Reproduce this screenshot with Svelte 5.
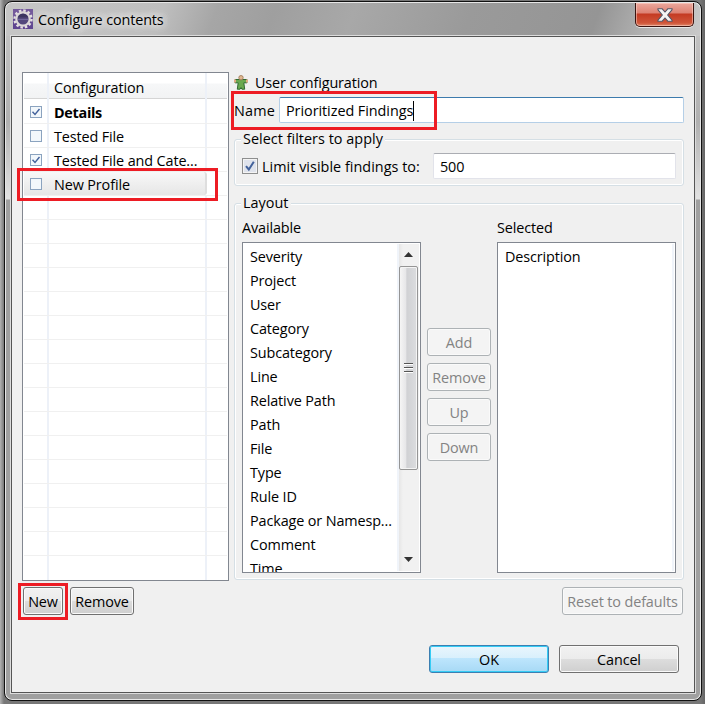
<script lang="ts">
    let name = 'Prioritized Findings';
    let limit = '500';

    const profiles = [
        { label: 'Details', checked: true, bold: true },
        { label: 'Tested File', checked: false },
        { label: 'Tested File and Cate...', checked: true },
        { label: 'New Profile', checked: false, selected: true }
    ];
    const emptyRows = Array(16);

    const available = [
        'Severity', 'Project', 'User', 'Category', 'Subcategory', 'Line', 'Relative Path',
        'Path', 'File', 'Type', 'Rule ID', 'Package or Namesp...', 'Comment', 'Time'
    ];
    const selected = ['Description'];
    const actions = ['Add', 'Remove', 'Up', 'Down'];
</script>

<div class="desktop">
    <div class="window">
        <header class="titlebar">
            <svg class="app-icon" width="20" height="20" viewBox="0 0 20 20">
                <rect width="20" height="20" fill="#5f4590" />
                <rect width="20" height="7" fill="#8068a4" opacity=".6" />
                <circle cx="10" cy="10" r="8.500" fill="none" stroke="#e4e0e2" stroke-width="2.400" stroke-dasharray="2.500 1.950" />
                <circle cx="10" cy="10" r="6.700" fill="#53487c" stroke="#dcd8d8" stroke-width="2.200" />
                <path d="M5 8.500a5.200 5.200 0 0 1 10 0z" fill="#3c3560" />
                <path d="M5 10.500h10" stroke="#6f669b" stroke-width="1" />
            </svg>
            <span class="title">Configure contents</span>
            <button class="close" aria-label="Close">
                <svg width="16" height="14" viewBox="0 0 16 14">
                    <path d="M1 .8h4.200L8 4 10.800.8H15v1L10.700 7 15 12.200v1h-4.200L8 10l-2.800 3.200H1v-1L5.300 7 1 1.800z" fill="#f4f4f4" stroke="#535666" stroke-width="1.100" />
                </svg>
            </button>
        </header>

        <main class="client">
            <div class="columns">
                <section class="left">
                    <div class="table">
                        <div class="table-row head">
                            <span class="cell check-cell"></span>
                            <span class="cell name-cell">Configuration</span>
                        </div>
                        {#each profiles as profile}
                            <div class="table-row" class:selected={profile.selected}>
                                <span class="cell check-cell">
                                    <span class="tick">
                                        {#if profile.checked}
                                            <svg width="10" height="10" viewBox="0 0 10 10"><path d="M1.500 4.800 4 7.500 8.500 2" /></svg>
                                        {/if}
                                    </span>
                                </span>
                                <span class="cell name-cell" class:bold={profile.bold}>{profile.label}</span>
                                {#if profile.selected}
                                    <span class="mark mark-row"></span>
                                {/if}
                            </div>
                        {/each}
                        {#each emptyRows as _}
                            <div class="table-row">
                                <span class="cell check-cell"></span>
                                <span class="cell name-cell"></span>
                            </div>
                        {/each}
                    </div>
                    <div class="table-buttons">
                        <button class="btn new">New<span class="mark mark-new"></span></button>
                        <button class="btn">Remove</button>
                    </div>
                </section>

                <section class="right">
                    <div class="owner">
                        <svg width="14" height="15" viewBox="0 0 14 15">
                            <path d="M1 4.500h12v3.300H9.800l.9 6.400H7.900L7 12.500l-.9 1.700H3.300l.9-6.400H1z" fill="#6aa84f" stroke="#2f6b30" stroke-width="1" />
                            <path d="M0 4.500h2v3H0zM12 4.500h2v3h-2z" fill="#e0aa84" />
                            <circle cx="7" cy="2.700" r="2.200" fill="#e0b890" stroke="#9a7352" stroke-width=".8" />
                        </svg>
                        <span>User configuration</span>
                    </div>

                    <div class="name-row">
                        <span class="name-label">Name</span>
                        <div class="field focused">{name}<i class="caret"></i></div>
                        <span class="mark mark-name"></span>
                    </div>

                    <fieldset class="filters">
                        <legend>Select filters to apply</legend>
                        <div class="limit">
                            <span class="checkbox">
                                <svg width="12" height="12" viewBox="0 0 12 12"><path d="M2 6.200 4.800 9.500 9.800 1.800" /></svg>
                            </span>
                            <span class="limit-label">Limit visible findings to:</span>
                            <div class="field">{limit}</div>
                        </div>
                    </fieldset>

                    <fieldset class="layout">
                        <legend>Layout</legend>
                        <div class="lists">
                            <div class="pane">
                                <div class="caption">Available</div>
                                <div class="list">
                                    <div class="items">
                                        {#each available as item}
                                            <div class="item">{item}</div>
                                        {/each}
                                    </div>
                                    <div class="scrollbar">
                                        <svg class="arrow" width="9" height="5" viewBox="0 0 9 5"><path d="M0 5 4.500 0 9 5z" /></svg>
                                        <div class="thumb">
                                            <i></i><i></i><i></i>
                                        </div>
                                        <svg class="arrow down" width="9" height="5" viewBox="0 0 9 5"><path d="M0 0h9L4.500 5z" /></svg>
                                    </div>
                                </div>
                            </div>
                            <div class="actions">
                                {#each actions as action}
                                    <button class="btn" disabled>{action}</button>
                                {/each}
                            </div>
                            <div class="pane">
                                <div class="caption">Selected</div>
                                <div class="list">
                                    <div class="items wide">
                                        {#each selected as item}
                                            <div class="item">{item}</div>
                                        {/each}
                                    </div>
                                </div>
                            </div>
                        </div>
                    </fieldset>

                    <button class="btn reset" disabled>Reset to defaults</button>
                </section>
            </div>

            <footer>
                <button class="btn default">OK</button>
                <button class="btn">Cancel</button>
            </footer>
        </main>
    </div>
</div>

<style>
    :global(body) {
        overflow: hidden;
    }

    .desktop,
    .desktop * {
        box-sizing: border-box;
    }

    .desktop {
        width: 705px;
        height: 704px;
        padding: 1px 3px 3px 4px;
        background: linear-gradient(90deg, #b4b4b4, #777 4px, #777 700px, #666);
        font-family: 'Open Sans', 'Noto Sans', sans-serif;
        font-size: 14.4px;
        line-height: 20px;
        letter-spacing: -0.12px;
        color: #000;
        white-space: nowrap;
    }

    .window {
        width: 698px;
        height: 700px;
        border: 1px solid #111;
        border-radius: 8px;
        padding: 0 6px 6px;
        background: linear-gradient(#c9c9c9, #b0b0b0 120px, #e2e2e2 197px, #a0a0a0 198px, #a0a0a0);
        box-shadow: inset 0 0 0 1px #e6e6e6;
    }

    .titlebar {
        display: flex;
        align-items: flex-start;
        height: 33px;
        margin: 1px -5px 0;
        padding: 6px 6px 0 7px;
        border-radius: 7px 7px 0 0;
        background: linear-gradient(110deg, #c6c6c6, #bebebe 150px, #a6a6a6 200px, #9f9f9f 255px, #a8a8a8 330px, #9a9a9a 440px, #959595 560px, #b8b8b8 620px, #c9c9c9);
    }

    .title {
        margin: 0 auto 0 5px;
        padding-top: 1px;
        text-shadow: 0 0 10px #eee, 0 0 10px #eee, 0 0 6px #eee;
    }

    .close {
        display: flex;
        align-items: center;
        justify-content: center;
        width: 59px;
        height: 24px;
        margin-top: -6px;
        padding: 0;
        border: 1px solid #3b1410;
        border-top: 0;
        border-radius: 0 0 5px 5px;
        background: linear-gradient(#eba79c, #dd8273 10px, #c43a22 11px, #d0563a 20px, #e08a6c);
        box-shadow: inset 0 0 0 1px rgba(255, 220, 210, 0.5), 0 1px 0 #e6e6e6;
    }

    .client {
        height: 657px;
        border: 1px solid #555;
        padding: 35px 10px 0;
        background: #f0f0f0;
        box-shadow: 0 0 0 1px #dcdcdc;
    }

    .columns {
        display: flex;
        gap: 5px;
    }

    .left {
        flex-shrink: 0;
        width: 207px;
    }

    .table {
        height: 509px;
        padding: 0 1px;
        border: 1px solid #828790;
        background: #fff;
    }

    .table-row {
        display: flex;
        position: relative;
        height: 24px;
        border-bottom: 1px solid #f0f0f0;
    }

    .table-row:last-child {
        border-bottom: 0;
    }

    .head {
        height: 27px;
        border-bottom: 0;
        background: linear-gradient(#fff 10px, #f6f7f8 11px, #f2f3f4 25px, #d5d5d5 25px, #d5d5d5 26px, #fff 26px);
    }

    .cell {
        height: 100%;
        border-right: 2px solid #edf1f8;
    }

    .check-cell {
        display: flex;
        align-items: center;
        width: 25px;
        padding-left: 6px;
    }

    .name-cell {
        width: 158px;
        padding: 3px 0 0 5px;
    }

    .head .name-cell {
        padding-top: 5px;
    }

    .bold {
        font-weight: 700;
        letter-spacing: -0.3px;
    }

    .selected .name-cell {
        border-right-color: #dedede;
        border-radius: 0 3px 3px 0;
        background: linear-gradient(#f8f8f8, #e6e6e6);
    }

    .selected .check-cell {
        width: 25px;
        border-right: 0;
        background: linear-gradient(#f8f8f8, #e6e6e6);
    }

    .tick {
        width: 12px;
        height: 12px;
        border: 1px solid #8ba3bf;
        background: #f2f7fb;
    }

    svg {
        display: block;
    }

    .tick path,
    .checkbox path {
        fill: none;
        stroke: #42619b;
        stroke-width: 1.4;
    }

    .mark {
        position: absolute;
        border: 3px solid #ed1c24;
        pointer-events: none;
    }

    .mark-row {
        left: -7px;
        top: -4px;
        width: 201px;
        height: 33px;
        z-index: 1;
    }

    .mark-new {
        left: -6px;
        top: -5px;
        width: 50px;
        height: 37px;
    }

    .mark-name {
        left: -3px;
        top: -6px;
        width: 206px;
        height: 39px;
    }

    .table-buttons {
        display: flex;
        gap: 7px;
        padding: 6px 0 0 1px;
    }

    .btn {
        height: 28px;
        min-width: 64px;
        padding: 1px 0 0;
        border: 1px solid #707070;
        border-radius: 3px;
        background: linear-gradient(#f2f2f2, #ebebeb 50%, #dddddd 50%, #cfcfcf);
        box-shadow: inset 0 0 0 1px #fafafa;
        font: inherit;
        letter-spacing: inherit;
        color: #000;
    }

    .btn:disabled {
        border-color: #adb2b5;
        background: #f4f4f4;
        color: #838383;
    }

    .new {
        position: relative;
        min-width: 40px;
    }

    .right {
        flex-shrink: 0;
        width: 450px;
    }

    .owner {
        display: flex;
        gap: 7px;
        height: 25px;
        padding-top: 1px;
    }

    .owner svg {
        margin-top: 2px;
    }

    .name-row {
        display: flex;
        position: relative;
        align-items: center;
        height: 26px;
    }

    .name-label {
        width: 45px;
        padding-top: 1px;
        letter-spacing: 0.2px;
    }

    .field {
        flex: 1;
        height: 26px;
        padding: 3px 6px;
        border: 1px solid #e2e3ea;
        border-top-color: #abadb3;
        border-radius: 2px;
        background: #fff;
    }

    .focused {
        display: flex;
        border-color: #b5cfe7;
        border-top-color: #3d7bad;
        letter-spacing: -0.05px;
    }

    .caret {
        width: 1px;
        height: 20px;
        background: #000;
    }

    fieldset {
        min-width: 0;
        margin: 6px 0 0;
        padding: 0 7px;
        border: 1px solid #d5dfe5;
        border-radius: 3px;
        box-shadow: inset 0 0 0 1px #fff;
    }

    legend {
        height: 20px;
        margin-left: -1px;
        padding: 0 2px;
        background: #f0f0f0;
        letter-spacing: 0.03px;
    }

    .filters {
        height: 57px;
    }

    .limit {
        display: flex;
        align-items: center;
        padding-top: 4px;
    }

    .checkbox {
        width: 16px;
        height: 16px;
        border: 1px solid #8e8f8f;
        padding: 1px;
        background: #dfe3ec;
        box-shadow: inset 0 0 0 1px #f4f4f4;
    }

    .checkbox path {
        stroke-width: 2;
    }

    .limit-label {
        width: 175px;
        padding: 1px 0 0 4px;
        letter-spacing: 0.03px;
    }

    .layout {
        height: 387px;
        margin-top: 7px;
    }

    .lists {
        display: flex;
        gap: 6px;
        padding-top: 5px;
    }

    .pane {
        width: 179px;
    }

    .caption {
        height: 24px;
    }

    .list {
        display: flex;
        height: 331px;
        padding: 1px;
        border: 1px solid #828790;
        background: #fff;
        overflow: hidden;
    }

    .items {
        width: 155px;
        padding-top: 1px;
        border-right: 2px solid #f0f4fa;
    }

    .wide {
        width: 175px;
    }

    .item {
        height: 24px;
        padding: 2px 0 0 6px;
    }

    .scrollbar {
        display: flex;
        flex-direction: column;
        align-items: center;
        width: 20px;
        padding-right: 1px;
        background: linear-gradient(90deg, #e6e6e6, #f1f1f1 4px);
    }

    .arrow {
        margin: 8px 0 9px;
        fill: #333;
    }

    .down {
        margin: auto 0 9px;
    }

    .thumb {
        display: flex;
        flex-direction: column;
        align-items: center;
        justify-content: center;
        gap: 2px;
        width: 19px;
        height: 204px;
        border: 1px solid #959595;
        border-radius: 2px;
        background: linear-gradient(90deg, #f5f5f5, #e6e6e8 35%, #d0d1d4 40%, #dcdddf);
        box-shadow: inset 0 0 0 1px #f4f4f4;
    }

    .thumb i {
        width: 9px;
        height: 2px;
        border-top: 1px solid #555;
        background: #fff;
    }

    .actions {
        display: flex;
        flex-direction: column;
        gap: 7px;
        padding-top: 110px;
    }

    .reset {
        display: block;
        width: 121px;
        margin: 7px 1px 0 auto;
    }

    footer {
        display: flex;
        justify-content: flex-end;
        gap: 10px;
        padding: 30px 5px 0 0;
    }

    footer .btn {
        width: 120px;
    }

    .default {
        border-color: #3c7fb1;
        background: linear-gradient(#e9f6fd, #d9f0fc 46%, #bee6fd 46%, #a7d9f5);
        box-shadow: inset 0 0 0 1px #35ccf5;
    }
</style>
